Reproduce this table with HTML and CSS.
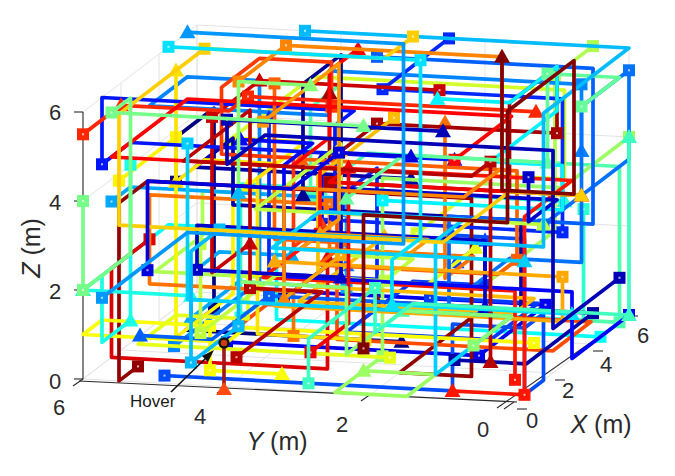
FILE: index.html
```html
<!DOCTYPE html>
<html lang="en">
<head>
<meta charset="utf-8">
<title>3D paths</title>
<link rel="stylesheet" href="styles.css">
</head>
<body>
<div class="figure">
  <svg class="plot" id="plot" width="675" height="476" viewBox="0 0 675 476" xmlns="http://www.w3.org/2000/svg">
    <g id="grid" class="grid"></g>
    <g class="axis-lines">
      <line x1="83" y1="379" x2="83" y2="112"/>
      <line x1="79" y1="381" x2="517" y2="402"/>
      <line x1="497" y1="408" x2="627" y2="317"/>
      <line x1="74" y1="379" x2="83" y2="379"/>
      <line x1="74" y1="290" x2="83" y2="290"/>
      <line x1="74" y1="201" x2="83" y2="201"/>
      <line x1="74" y1="112" x2="83" y2="112"/>
      <line x1="73" y1="386" x2="83" y2="379"/>
      <line x1="217" y1="393" x2="227" y2="387"/>
      <line x1="361" y1="401" x2="371" y2="394"/>
      <line x1="504" y1="409" x2="514" y2="402"/>
      <line x1="517" y1="409" x2="527" y2="409"/>
      <line x1="555" y1="380" x2="565" y2="380"/>
      <line x1="593" y1="351" x2="603" y2="351"/>
      <line x1="628" y1="316" x2="638" y2="316"/>
    </g>
    <g id="data"></g>
    <g class="hover">
      <line class="hover-stem" x1="224" y1="343" x2="224" y2="388"/>
      <polygon class="hover-tri" points="224,382 232,395 216,395"/>
      <circle class="hover-dot" cx="224" cy="343" r="4.5"/>
      <line class="hover-arrow" x1="171" y1="392" x2="208" y2="356"/>
      <polygon class="hover-head" points="214,350 202,356 208,362"/>
      <text class="hover-label" x="130" y="407">Hover</text>
    </g>
    <g class="ticks">
      <text x="55" y="389">0</text>
      <text x="55" y="299">2</text>
      <text x="55" y="210">4</text>
      <text x="55" y="120">6</text>
      <text x="59" y="415">6</text>
      <text x="200" y="424">4</text>
      <text x="342" y="432">2</text>
      <text x="483" y="437">0</text>
      <text x="532" y="428">0</text>
      <text x="568" y="398">2</text>
      <text x="606" y="372">4</text>
      <text x="643" y="343">6</text>
    </g>
    <g class="axis-labels">
      <text x="277" y="450"><tspan class="var">Y</tspan> (m)</text>
      <text x="601" y="433"><tspan class="var">X</tspan> (m)</text>
      <text transform="translate(40 248) rotate(-90)"><tspan class="var">Z</tspan> (m)</text>
    </g>
  </svg>
</div>
<script src="plot.js"></script>
</body>
</html>
```

FILE: styles.css
```css
html, body {
  margin: 0;
  padding: 0;
  background: #ffffff;
}
.figure {
  width: 675px;
  height: 476px;
  overflow: hidden;
}
.plot {
  display: block;
}
.grid line {
  stroke: #e3e3e3;
  stroke-width: 1;
}
.axis-lines line {
  stroke: #2b2b2b;
  stroke-width: 1.1;
}
.path {
  fill: none;
  stroke-width: 3.7;
  stroke-linejoin: round;
  stroke-linecap: square;
}
.dot {
  fill: #ffffff;
  opacity: 0.7;
}
.ticks text {
  font-family: "Liberation Sans", Arial, sans-serif;
  font-size: 22px;
  fill: #2b2b2b;
  text-anchor: middle;
}
.axis-labels text {
  font-family: "Liberation Sans", Arial, sans-serif;
  font-size: 25px;
  fill: #2b2b2b;
  text-anchor: middle;
}
.axis-labels .var {
  font-style: italic;
}
.hover-stem {
  stroke: #a0161a;
  stroke-width: 3.6;
}
.hover-tri {
  fill: #ff4a10;
}
.hover-dot {
  fill: #c84010;
  stroke: #111111;
  stroke-width: 2.4;
}
.hover-arrow {
  stroke: #111111;
  stroke-width: 1.6;
}
.hover-head {
  fill: #111111;
}
.hover-label {
  font-family: "Liberation Sans", Arial, sans-serif;
  font-size: 17px;
  fill: #1a1a1a;
}
```

FILE: plot.js
```js
(function () {
  var NS = 'http://www.w3.org/2000/svg';
  function P(x, y, z) {
    return [515 + 19 * x - 72 * y, 402 - 14.5 * x - 3.83 * y - 44.5 * z];
  }
  function rng(seed) {
    return function () {
      seed |= 0; seed = seed + 0x6D2B79F5 | 0;
      var t = Math.imul(seed ^ seed >>> 15, 1 | seed);
      t = t + Math.imul(t ^ t >>> 7, 61 | t) ^ t;
      return ((t ^ t >>> 14) >>> 0) / 4294967296;
    };
  }
  function jet(t) {
    function c(v) { return Math.round(255 * Math.max(0, Math.min(1, v))); }
    return 'rgb(' + c(1.5 - Math.abs(4 * t - 3)) + ',' + c(1.5 - Math.abs(4 * t - 2)) + ',' + c(1.5 - Math.abs(4 * t - 1)) + ')';
  }
  function el(name, attrs, parent) {
    var e = document.createElementNS(NS, name);
    for (var k in attrs) e.setAttribute(k, attrs[k]);
    parent.appendChild(e);
    return e;
  }
  function line(a, b, parent) {
    var p = P(a[0], a[1], a[2]), q = P(b[0], b[1], b[2]);
    el('line', { x1: p[0].toFixed(1), y1: p[1].toFixed(1), x2: q[0].toFixed(1), y2: q[1].toFixed(1) }, parent);
  }

  var grid = document.getElementById('grid');
  for (var v = 0; v <= 6; v += 2) {
    line([6, v, 0], [6, v, 6], grid);
    line([6, 0, v], [6, 6, v], grid);
    line([v, 6, 0], [v, 6, 6], grid);
    line([0, 6, v], [6, 6, v], grid);
    line([0, v, 0], [6, v, 0], grid);
    line([v, 0, 0], [v, 6, 0], grid);
  }

  var data = document.getElementById('data');
  var r = rng(9157);
  var N = 56;
  function h() {
    var q = r();
    if (q < 0.12) return 0;
    if (q < 0.24) return 6;
    return Math.round(r() * 12) / 2;
  }
  function square(pt, col) {
    var p = P(pt[0], pt[1], pt[2]);
    el('rect', { x: (p[0] - 6).toFixed(1), y: (p[1] - 6).toFixed(1), width: 12, height: 12, fill: col }, data);
    el('rect', { class: 'dot', x: (p[0] - 1).toFixed(1), y: (p[1] - 1).toFixed(1), width: 2, height: 2 }, data);
  }
  function tri(pt, col) {
    var p = P(pt[0], pt[1], pt[2]);
    var pts = [p[0], p[1] - 8, p[0] + 8, p[1] + 6, p[0] - 8, p[1] + 6];
    el('polygon', { points: pts.map(function (n) { return n.toFixed(1); }).join(' '), fill: col }, data);
  }
  var order = [];
  for (var i = 0; i < N; i++) order.push(i);
  for (i = N - 1; i > 0; i--) { var j = Math.floor(r() * (i + 1)); var tmp = order[i]; order[i] = order[j]; order[j] = tmp; }
  var weights = [0.4, 0.32, 0.28];
  for (var n = 0; n < N; n++) {
    var col = jet(order[n] / (N - 1));
    var cur = [h(), h(), h()];
    var pts = [cur.slice()];
    var segs = 4 + Math.floor(r() * 5);
    var last = -1;
    for (var s = 0; s < segs; s++) {
      var ax;
      do {
        var q = r();
        ax = q < weights[0] ? 0 : (q < weights[0] + weights[1] ? 1 : 2);
      } while (ax === last);
      var nv;
      do { nv = h(); } while (Math.abs(nv - cur[ax]) < 1 || Math.abs(nv - cur[ax]) > 4.5);
      cur[ax] = nv;
      pts.push(cur.slice());
      last = ax;
    }
    var d = pts.map(function (p3) { var p = P(p3[0], p3[1], p3[2]); return p[0].toFixed(1) + ',' + p[1].toFixed(1); }).join(' ');
    el('polyline', { class: 'path', points: d, stroke: col }, data);
    square(pts[0], col);
    for (var k = 1; k < pts.length - 1; k++) {
      if (r() < 0.18) square(pts[k], col);
    }
    if (r() < 0.25) tri(pts[1 + Math.floor(r() * (pts.length - 2))], col);
    tri(pts[pts.length - 1], col);
  }
})();
```
